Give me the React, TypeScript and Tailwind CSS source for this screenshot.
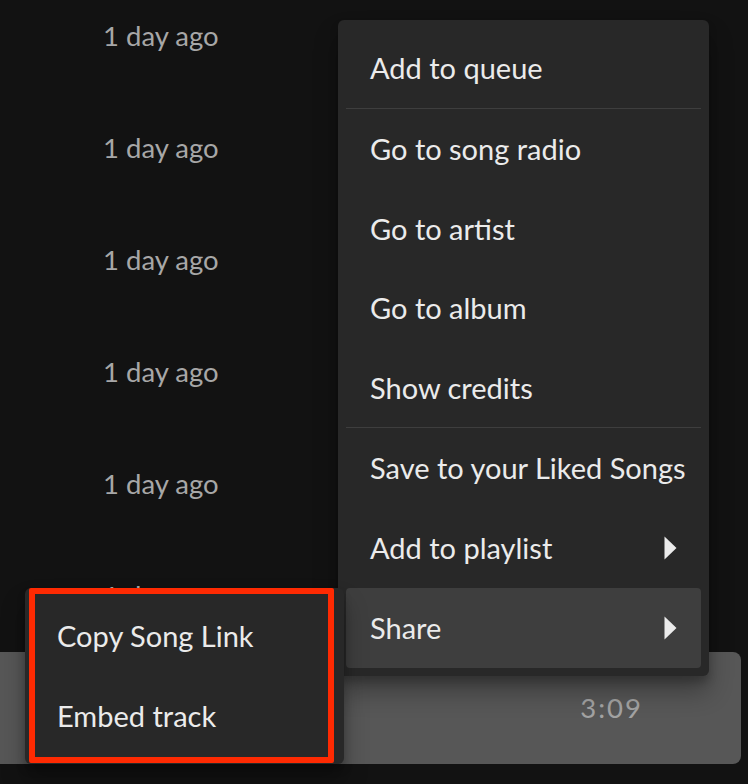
const rows = [0, 1, 2, 3, 4, 5, 6];

const Arrow = () => (
  <svg width="13" height="24" viewBox="0 0 13 24" className="shrink-0">
    <path d="M0.5 0.5 L12.5 12 L0.5 23.5 Z" fill="#ebebeb" />
  </svg>
);

const Item = ({ label, arrow, active, h = "h-[80px]" }: { label: string; arrow?: boolean; active?: boolean; h?: string }) => (
  <div className={`${h} flex items-center justify-between px-6 rounded-sm ${active ? "bg-[#3e3e3e]" : ""}`}>
    <span className="whitespace-nowrap">{label}</span>
    {arrow && <Arrow />}
  </div>
);

export default function App() {
  return (
    <div
      className="relative h-[784px] w-[748px] overflow-hidden bg-[#121212]"
      style={{ fontFamily: "Lato, 'Noto Sans', sans-serif" }}
    >
      {/* track rows behind the menu */}
      <div className="-mt-5 -ml-3 mr-[7px] flex flex-col">
        {rows.map((i) => (
          <div
            key={i}
            className={`flex h-[112px] items-center rounded-lg pl-[115px] pr-[98px] ${i === 6 ? "bg-[#575757]" : ""}`}
          >
            <span className="text-[27.5px] text-[#a7a7a7]">1 day ago</span>
            <span className={`ml-auto text-[27.5px] tracking-[2px] ${i === 6 ? "text-[#a3a3a3]" : "text-[#a7a7a7]"}`}>3:09</span>
          </div>
        ))}
      </div>

      {/* context menu */}
      <div className="absolute left-[338px] top-[20px] w-[371px] rounded-md bg-[#282828] p-2 text-[29px] text-[#ebebeb] shadow-[0_16px_24px_rgba(0,0,0,0.3),0_6px_8px_rgba(0,0,0,0.2)]">
        <Item label="Add to queue" />
        <div className="h-px bg-[#3e3e3e]" />
        <Item label="Go to song radio" h="h-[79.5px]" />
        <Item label="Go to artist" h="h-[79.5px]" />
        <Item label="Go to album" h="h-[79.5px]" />
        <Item label="Show credits" h="h-[79.5px]" />
        <div className="h-px bg-[#3e3e3e]" />
        <Item label="Save to your Liked Songs" />
        <Item label="Add to playlist" arrow />
        <Item label="Share" arrow active />
      </div>

      {/* share submenu */}
      <div className="absolute left-[25px] top-[588px] w-[319px] rounded-md bg-[#282828] p-2 text-[29px] text-[#ebebeb] shadow-[0_16px_24px_rgba(0,0,0,0.3),0_6px_8px_rgba(0,0,0,0.2)]">
        <Item label="Copy Song Link" />
        <Item label="Embed track" />
      </div>

      {/* red highlight annotation */}
      <div className="absolute left-[29px] top-[588px] h-[175px] w-[305px] rounded-[2px] border-[6px] border-[#fe2a02]" />
    </div>
  );
}
